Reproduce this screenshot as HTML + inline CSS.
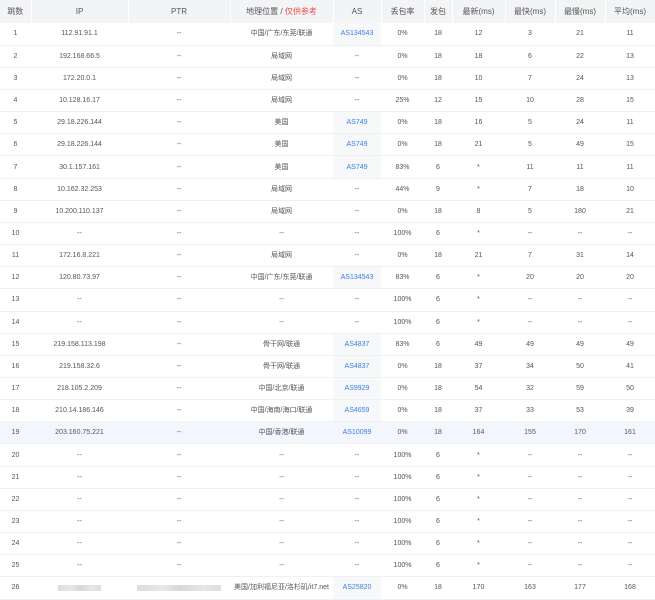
<!DOCTYPE html>
<html><head><meta charset="utf-8"><style>
*{margin:0;padding:0;box-sizing:border-box}
body{width:655px;height:599px;background:#fff;overflow:hidden;font-family:"Liberation Sans","Noto Sans CJK SC",sans-serif;color:#555}
table{border-collapse:collapse;table-layout:fixed;width:655px}
th{height:23px;background:#f3f4f6;font-weight:normal;font-size:8px;line-height:10px;color:#555;border-right:1px solid #fff;vertical-align:middle}
td{height:22.16px;font-size:7px;line-height:9px;text-align:center;vertical-align:middle;border-bottom:1px solid #eef0f3;white-space:nowrap;overflow:hidden}
td span,th span{vertical-align:top}
.r{color:#f04b4b;vertical-align:baseline}
.a{color:#3b7fe6;background:#f6f8fa}
tr.h td{background:#f3f7fd}
.b{display:inline-block;height:6px;background:linear-gradient(90deg,#dcdcdc,#e8e8e8 30%,#d8d8d8 50%,#e6e6e6 80%,#dedede);vertical-align:middle!important}
</style></head><body>
<table>
<colgroup><col style="width:31px"><col style="width:97px"><col style="width:102px"><col style="width:103px"><col style="width:48px"><col style="width:43px"><col style="width:28px"><col style="width:53px"><col style="width:50px"><col style="width:50px"><col style="width:50px"></colgroup>
<tr><th>跳数</th><th>IP</th><th>PTR</th><th>地理位置 / <span class="r">仅供参考</span></th><th>AS</th><th>丢包率</th><th>发包</th><th>最新(ms)</th><th>最快(ms)</th><th>最慢(ms)</th><th>平均(ms)</th></tr>
<tr><td>1</td><td>112.91.91.1</td><td>--</td><td>中国/广东/东莞/联通</td><td class="a">AS134543</td><td>0%</td><td>18</td><td>12</td><td>3</td><td>21</td><td>11</td></tr>
<tr><td>2</td><td>192.168.66.5</td><td>--</td><td>局域网</td><td>--</td><td>0%</td><td>18</td><td>18</td><td>6</td><td>22</td><td>13</td></tr>
<tr><td>3</td><td>172.20.0.1</td><td>--</td><td>局域网</td><td>--</td><td>0%</td><td>18</td><td>10</td><td>7</td><td>24</td><td>13</td></tr>
<tr><td>4</td><td>10.128.16.17</td><td>--</td><td>局域网</td><td>--</td><td>25%</td><td>12</td><td>15</td><td>10</td><td>28</td><td>15</td></tr>
<tr><td>5</td><td>29.18.226.144</td><td>--</td><td>美国</td><td class="a">AS749</td><td>0%</td><td>18</td><td>16</td><td>5</td><td>24</td><td>11</td></tr>
<tr><td>6</td><td>29.18.226.144</td><td>--</td><td>美国</td><td class="a">AS749</td><td>0%</td><td>18</td><td>21</td><td>5</td><td>49</td><td>15</td></tr>
<tr><td>7</td><td>30.1.157.161</td><td>--</td><td>美国</td><td class="a">AS749</td><td>83%</td><td>6</td><td>*</td><td>11</td><td>11</td><td>11</td></tr>
<tr><td>8</td><td>10.162.32.253</td><td>--</td><td>局域网</td><td>--</td><td>44%</td><td>9</td><td>*</td><td>7</td><td>18</td><td>10</td></tr>
<tr><td>9</td><td>10.200.110.137</td><td>--</td><td>局域网</td><td>--</td><td>0%</td><td>18</td><td>8</td><td>5</td><td>180</td><td>21</td></tr>
<tr><td>10</td><td>--</td><td>--</td><td>--</td><td>--</td><td>100%</td><td>6</td><td>*</td><td>--</td><td>--</td><td>--</td></tr>
<tr><td>11</td><td>172.16.8.221</td><td>--</td><td>局域网</td><td>--</td><td>0%</td><td>18</td><td>21</td><td>7</td><td>31</td><td>14</td></tr>
<tr><td>12</td><td>120.80.73.97</td><td>--</td><td>中国/广东/东莞/联通</td><td class="a">AS134543</td><td>83%</td><td>6</td><td>*</td><td>20</td><td>20</td><td>20</td></tr>
<tr><td>13</td><td>--</td><td>--</td><td>--</td><td>--</td><td>100%</td><td>6</td><td>*</td><td>--</td><td>--</td><td>--</td></tr>
<tr><td>14</td><td>--</td><td>--</td><td>--</td><td>--</td><td>100%</td><td>6</td><td>*</td><td>--</td><td>--</td><td>--</td></tr>
<tr><td>15</td><td>219.158.113.198</td><td>--</td><td>骨干网/联通</td><td class="a">AS4837</td><td>83%</td><td>6</td><td>49</td><td>49</td><td>49</td><td>49</td></tr>
<tr><td>16</td><td>219.158.32.6</td><td>--</td><td>骨干网/联通</td><td class="a">AS4837</td><td>0%</td><td>18</td><td>37</td><td>34</td><td>50</td><td>41</td></tr>
<tr><td>17</td><td>218.105.2.209</td><td>--</td><td>中国/北京/联通</td><td class="a">AS9929</td><td>0%</td><td>18</td><td>54</td><td>32</td><td>59</td><td>50</td></tr>
<tr><td>18</td><td>210.14.186.146</td><td>--</td><td>中国/海南/海口/联通</td><td class="a">AS4659</td><td>0%</td><td>18</td><td>37</td><td>33</td><td>53</td><td>39</td></tr>
<tr class="h"><td>19</td><td>203.160.75.221</td><td>--</td><td>中国/香港/联通</td><td class="a">AS10099</td><td>0%</td><td>18</td><td>164</td><td>155</td><td>170</td><td>161</td></tr>
<tr><td>20</td><td>--</td><td>--</td><td>--</td><td>--</td><td>100%</td><td>6</td><td>*</td><td>--</td><td>--</td><td>--</td></tr>
<tr><td>21</td><td>--</td><td>--</td><td>--</td><td>--</td><td>100%</td><td>6</td><td>*</td><td>--</td><td>--</td><td>--</td></tr>
<tr><td>22</td><td>--</td><td>--</td><td>--</td><td>--</td><td>100%</td><td>6</td><td>*</td><td>--</td><td>--</td><td>--</td></tr>
<tr><td>23</td><td>--</td><td>--</td><td>--</td><td>--</td><td>100%</td><td>6</td><td>*</td><td>--</td><td>--</td><td>--</td></tr>
<tr><td>24</td><td>--</td><td>--</td><td>--</td><td>--</td><td>100%</td><td>6</td><td>*</td><td>--</td><td>--</td><td>--</td></tr>
<tr><td>25</td><td>--</td><td>--</td><td>--</td><td>--</td><td>100%</td><td>6</td><td>*</td><td>--</td><td>--</td><td>--</td></tr>
<tr><td>26</td><td><span class="b" style="width:43px"></span></td><td><span class="b" style="width:84px"></span></td><td>美国/加利福尼亚/洛杉矶/it7.net</td><td class="a">AS25820</td><td>0%</td><td>18</td><td>170</td><td>163</td><td>177</td><td>168</td></tr>
</table>
</body></html>
